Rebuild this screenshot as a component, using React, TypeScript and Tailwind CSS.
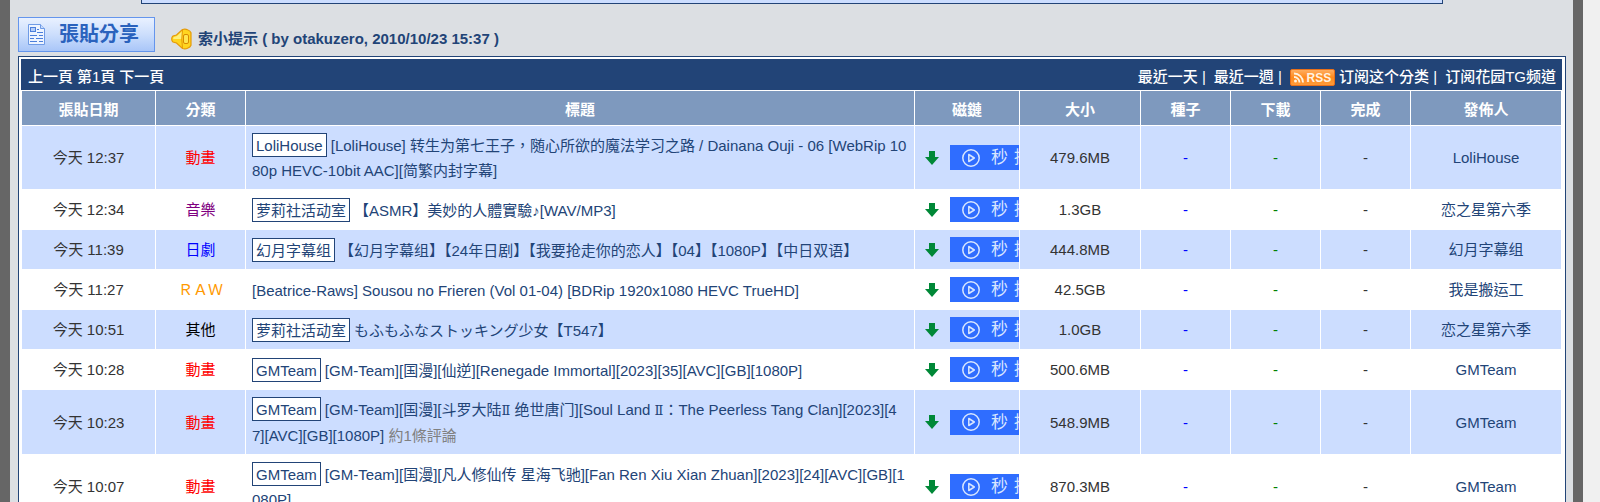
import React from "react";

type Row = {
  time: string;
  category: string;
  categoryClass: string;
  team?: string;
  title: string;
  comments?: string;
  size: string;
  author: string;
};

const rows: Row[] = [
  { time: "今天 12:37", category: "動畫", categoryClass: "text-[#ff0000]", team: "LoliHouse", title: "[LoliHouse] 转生为第七王子，随心所欲的魔法学习之路 / Dainana Ouji - 06 [WebRip 1080p HEVC-10bit AAC][简繁内封字幕]", size: "479.6MB", author: "LoliHouse" },
  { time: "今天 12:34", category: "音樂", categoryClass: "text-[#800080]", team: "萝莉社活动室", title: "【ASMR】美妙的人體實驗♪[WAV/MP3]", size: "1.3GB", author: "恋之星第六季" },
  { time: "今天 11:39", category: "日劇", categoryClass: "text-[#0000ff]", team: "幻月字幕组", title: "【幻月字幕组】【24年日剧】【我要抢走你的恋人】【04】【1080P】【中日双语】", size: "444.8MB", author: "幻月字幕组" },
  { time: "今天 11:27", category: "ＲＡＷ", categoryClass: "text-[#ff9900]", title: "[Beatrice-Raws] Sousou no Frieren (Vol 01-04) [BDRip 1920x1080 HEVC TrueHD]", size: "42.5GB", author: "我是搬运工" },
  { time: "今天 10:51", category: "其他", categoryClass: "text-black", team: "萝莉社活动室", title: "もふもふなストッキング少女【T547】", size: "1.0GB", author: "恋之星第六季" },
  { time: "今天 10:28", category: "動畫", categoryClass: "text-[#ff0000]", team: "GMTeam", title: "[GM-Team][国漫][仙逆][Renegade Immortal][2023][35][AVC][GB][1080P]", size: "500.6MB", author: "GMTeam" },
  { time: "今天 10:23", category: "動畫", categoryClass: "text-[#ff0000]", team: "GMTeam", title: "[GM-Team][国漫][斗罗大陆Ⅱ 绝世唐门][Soul Land Ⅱ：The Peerless Tang Clan][2023][47][AVC][GB][1080P]", comments: "約1條評論", size: "548.9MB", author: "GMTeam" },
  { time: "今天 10:07", category: "動畫", categoryClass: "text-[#ff0000]", team: "GMTeam", title: "[GM-Team][国漫][凡人修仙传 星海飞驰][Fan Ren Xiu Xian Zhuan][2023][24][AVC][GB][1080P]", size: "870.3MB", author: "GMTeam" },
];

function DocIcon() {
  return (
    <svg width="20" height="23" viewBox="0 0 20 23" aria-hidden="true">
      <path d="M1.5 1.5h12l4 4v16h-16z" fill="#eef4ff" stroke="#6f9be6" />
      <path d="M13.5 1.5v4h4" fill="#c9dcfb" stroke="#6f9be6" />
      <rect x="3.5" y="4.5" width="5" height="4" fill="#b4cdf8" stroke="#4c7fdb" />
      <path d="M10 6.5h2M10 9.5h6M3 12.5h7M12 12.5h4M3 15.5h4M9 15.5h7M3 18.5h7M12 18.5h4" stroke="#4c7fdb" />
    </svg>
  );
}

function SpeakerIcon() {
  return (
    <svg width="21" height="22" viewBox="0 0 21 22" aria-hidden="true">
      <path d="M11.500 1.500 5.500 7 2 8Q.7 9 .7 11t1.300 3l3.500 1 6 5.500q3 .7 5-.3 2.800-1 3.500-3V4.800q-.7-2-3.500-3-2-1-5-.3z" fill="#ffd51f" stroke="#e59a08" strokeWidth="1.200" />
      <path d="M11 3.300 6 8 2.500 9.200l-.3 1.800H11z" fill="#fff07a" />
      <path d="M11.500 1.500q-1.500 9.500 0 19" fill="none" stroke="#e59a08" />
      <rect x="12.500" y="6.500" width="5" height="9" rx="1.500" fill="#ffe650" stroke="#d98a00" />
    </svg>
  );
}

function RssBadge() {
  return (
    <svg width="45" height="17" viewBox="0 0 45 17" className="inline-block align-[-4px]" role="img" aria-label="RSS">
      <defs>
        <linearGradient id="rss" x1="0" y1="0" x2="0" y2="1">
          <stop offset="0" stopColor="#ffb066" />
          <stop offset="0.5" stopColor="#ff8a1c" />
          <stop offset="1" stopColor="#ff9c3c" />
        </linearGradient>
      </defs>
      <rect x="0.5" y="0.5" width="44" height="16" rx="1.500" fill="url(#rss)" stroke="#e8701a" />
      <circle cx="5.500" cy="12" r="1.500" fill="#fff3e2" />
      <path d="M4 8a5.500 5.500 0 0 1 5.500 5.500M4 4.500a9 9 0 0 1 9 9" fill="none" stroke="#fff3e2" strokeWidth="1.800" />
      <text x="16.500" y="13" fontSize="12" fontWeight="bold" fontFamily="Liberation Sans, sans-serif" fill="#fff3e2">RSS</text>
    </svg>
  );
}

function DownArrow() {
  return (
    <svg width="14" height="14" viewBox="0 0 14 14" aria-hidden="true">
      <path d="M4 0h6v6h4L7 14 0 6h4z" fill="#008837" />
    </svg>
  );
}

function PlayIcon() {
  return (
    <svg width="18" height="18" viewBox="0 0 18 18" fill="none" stroke="#d8e6ff" strokeWidth="1.500" strokeLinejoin="round" className="shrink-0" aria-hidden="true">
      <circle cx="9" cy="9" r="8.200" />
      <path d="M6.800 5.500v7l5.500-3.500z" />
    </svg>
  );
}

function Title({ text }: { text: string }) {
  return (
    <>
      {text.split("Ⅱ").map((part, i) => (
        <React.Fragment key={i}>
          {i > 0 && <span className="font-['DejaVu_Serif',serif] text-[13px]">Ⅱ</span>}
          {part}
        </React.Fragment>
      ))}
    </>
  );
}

const headings = ["張貼日期", "分類", "標題", "磁鏈", "大小", "種子", "下載", "完成", "發佈人"];

export default function App() {
  return (
    <div className="h-screen overflow-hidden bg-[#f0f0f0] pr-[17px] font-['Liberation_Sans','Noto_Sans_CJK_TC',sans-serif] text-[15px] leading-[25px] text-[#333333]">
      <div className="min-h-full border-x-10 border-[#666666] bg-[#dcdfe3] pr-[7px] pl-2">
        <div className="mx-[123px] h-1 border-x border-b border-[#224477] bg-[#ccddff]" />

        <div className="flex h-[52px] items-start pt-[13px]">
          <button type="button" className="flex h-[35px] w-[137px] items-center gap-3 border border-[#6495ed] bg-linear-to-b from-[#e9f1ff] via-[#ccdefc] to-[#a9c6f8] pl-2 text-[20px] font-bold text-[#2a62bd]">
            <DocIcon />
            <span className="whitespace-nowrap">張貼分享</span>
          </button>
          <div className="ml-4 flex items-center pt-[9px]">
            <SpeakerIcon />
            <a href="#tips" className="ml-1.5 font-bold text-[#224477]">索小提示 ( by otakuzero, 2010/10/23 15:37 )</a>
          </div>
        </div>

        <div className="border border-[#224477] bg-white p-0.5 pr-[3px]">
          <div className="flex h-[31px] items-center justify-between bg-[#224477] pt-1 pr-1.5 pl-[7px] font-medium text-white">
            <nav className="flex gap-1">
              <a href="#prev">上一頁</a>
              <span>第1頁</span>
              <a href="#next">下一頁</a>
            </nav>
            <nav className="flex gap-2">
              <span><a href="#day">最近一天</a> |</span>
              <span><a href="#week">最近一週</a> |</span>
              <span><a href="#rss"><RssBadge /> 订阅这个分类</a> |</span>
              <a href="#tg">订阅花园TG频道</a>
            </nav>
          </div>

          <table className="w-full table-fixed border-separate border-spacing-[1px] text-center">
            <colgroup>
              <col className="w-[133px]" />
              <col className="w-[89px]" />
              <col />
              <col className="w-[104px]" />
              <col className="w-[120px]" />
              <col className="w-[89px]" />
              <col className="w-[89px]" />
              <col className="w-[89px]" />
              <col className="w-[150px]" />
            </colgroup>
            <thead>
              <tr className="h-[34px] bg-[#7e99be] text-white">
                {headings.map((h) => (
                  <th key={h} scope="col" className="p-0 pt-0.5 font-bold">{h}</th>
                ))}
              </tr>
            </thead>
            <tbody>
              {rows.map((r) => (
                <tr key={r.time} className="h-[39px] odd:bg-[#ccddff] even:bg-white">
                  <td className="p-0">{r.time}</td>
                  <td className="p-0"><a href="#category" className={r.categoryClass}>{r.category}</a></td>
                  <td className="px-1.5 pt-[7px] pb-1.5 text-left break-all text-[#224477]">
                    {r.team && (
                      <a href="#team" className="mr-1 inline-block border border-[#224477] bg-white px-[3px] pt-0.5 leading-5">{r.team}</a>
                    )}
                    <a href="#topic"><Title text={r.title} /></a>
                    {r.comments && <span className="text-[#808080]"> {r.comments}</span>}
                  </td>
                  <td className="p-0">
                    <div className="flex items-center gap-[11px] overflow-hidden pl-[10px]">
                      <a href="#magnet" aria-label="磁鏈下載" className="shrink-0"><DownArrow /></a>
                      <a href="#play" className="flex h-[25px] w-[100px] shrink-0 items-center gap-[11px] bg-[#2f6dff] pl-3 text-[17px] whitespace-nowrap text-[#d8e6ff]">
                        <PlayIcon />
                        <span className="flex gap-1.5"><span>秒</span><span>播</span></span>
                      </a>
                    </div>
                  </td>
                  <td className="p-0">{r.size}</td>
                  <td className="p-0 text-[#0000ff]">-</td>
                  <td className="p-0 text-[#008000]">-</td>
                  <td className="p-0">-</td>
                  <td className="p-0"><a href="#author" className="text-[#224477]">{r.author}</a></td>
                </tr>
              ))}
            </tbody>
          </table>
        </div>
      </div>
    </div>
  );
}
